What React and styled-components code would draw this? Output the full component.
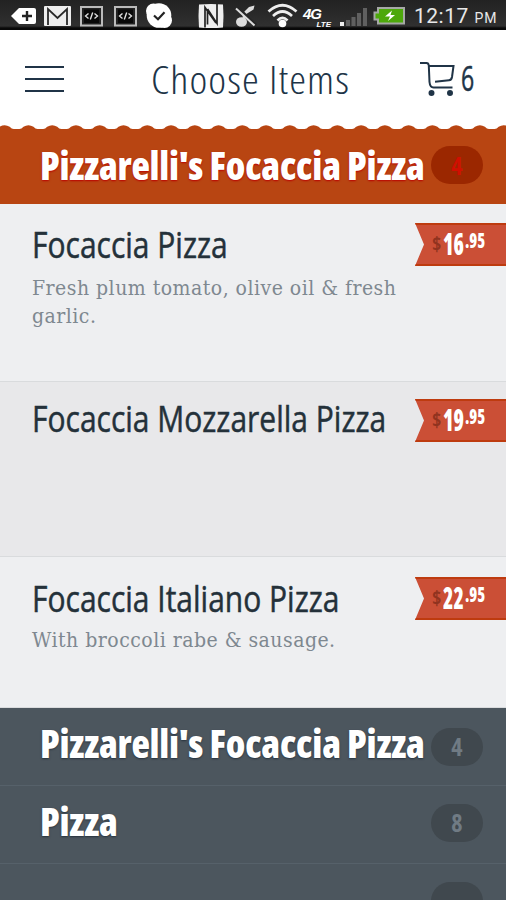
import React from "react";
import styled, { createGlobalStyle } from "styled-components";

const sections = [
  { name: "Pizzarelli's Focaccia Pizza", count: 4, padding: 20 },
  { name: "Pizza", count: 8, padding: 18 },
  { name: "", count: "", padding: 18 },
];

const items = [
  {
    name: "Focaccia Pizza",
    description: "Fresh plum tomato, olive oil & fresh garlic.",
    dollars: "16",
    cents: ".95",
    height: 178,
    padding: 19,
    lineHeight: 44,
  },
  {
    name: "Focaccia Mozzarella Pizza",
    description: "",
    dollars: "19",
    cents: ".95",
    height: 175,
    padding: 17,
    lineHeight: 40,
  },
  {
    name: "Focaccia Italiano Pizza",
    description: "With broccoli rabe & sausage.",
    dollars: "22",
    cents: ".95",
    height: 151,
    padding: 20,
    lineHeight: 43,
  },
];

const StatusIcons = () => (
  <>
    <Icon $left={10} $w={27}>
      <path d="M1 16 9 8h15q2 0 2 2v12q0 2-2 2H9z" fill="#fff" />
      <path d="M17 11v10M12 16h10" stroke="#222" strokeWidth="2.4" />
    </Icon>
    <Icon $left={7} $w={27}>
      <rect x="0" y="6" width="27" height="20" rx="1" fill="#eee" />
      <path d="M4 25V9l9.5 9L23 9v16" fill="none" stroke="#292929" strokeWidth="1.8" />
    </Icon>
    {[9, 11].map((left) => (
      <Icon key={left} $left={left} $w={23}>
        <rect x="1" y="7" width="21" height="18.5" fill="#222" stroke="#bbb" strokeWidth="2" />
        <rect x="4" y="9.5" width="15" height="13.5" fill="#080808" />
        <path d="m8.5 13.5-3 2.5 3 2.5m6-5 3 2.5-3 2.5M12.7 12.5l-2.4 7" fill="none" stroke="#ddd" strokeWidth="1.4" />
      </Icon>
    ))}
    <Icon $left={8} $w={28}>
      <circle cx="14" cy="15.5" r="12.3" fill="#fff" />
      <circle cx="8.5" cy="11" r="7.5" fill="#fff" />
      <circle cx="19.5" cy="20.5" r="7.5" fill="#fff" />
      <path d="m9 15.5 4 3.8 6.500-7" fill="none" stroke="#222" strokeWidth="2.2" />
    </Icon>
    <Icon $left={24} $w={28}>
      <path d="M2 4.500q12-1 24 0 1 11 0 23-12 1-24 0-1-12 0-23z" fill="#eee" />
      <path d="M8 27.500V7.500l11 15.500M10.500 11v13.500M20 4v19.500L10.500 9" fill="none" stroke="#222" strokeWidth="1.7" />
    </Icon>
    <Icon $left={9} $w={24}>
      <path d="M10 22V13" fill="none" stroke="#ddd" strokeWidth="2.6" />
      <path d="M9 13 15 7l5.500-1.500-1 4-8 5z" fill="#ddd" />
      <ellipse cx="7.5" cy="22" rx="5.5" ry="4.8" fill="#ddd" />
      <path d="m4 8 18 17.500" stroke="#262626" strokeWidth="3.4" />
      <path d="m2 8.500 18.500 17" stroke="#ddd" strokeWidth="2" />
    </Icon>
    <Icon $left={9} $w={31}>
      <path d="M1.5 11.5Q15.5-1 29.5 11.5M6 16q9.500-9 19 0M10.500 20.500q5-5 10 0" fill="none" stroke="#eee" strokeWidth="2.7" />
      <circle cx="15.5" cy="23.5" r="3.8" fill="#fff" />
    </Icon>
    <Network>
      <b>4G</b>
      <i>LTE</i>
    </Network>
    <Icon $left={9} $w={28}>
      <path d="M0 22h4v4H0z" fill="#eee" />
      <path d="M6 20h4v6H6zM11.500 17h4v9h-4zM17 13h4v13h-4zM23 8h4v18h-4z" fill="#606060" />
    </Icon>
    <Icon $left={5} $w={33}>
      <path d="M5 8h26v15.500H5v-4H1.500v-7H5z" fill="#4da80b" stroke="#a6a9a6" strokeWidth="2" />
      <path d="m19 10.500-7 6h5l-2 4.500 7-6h-4.500z" fill="#fff" />
    </Icon>
  </>
);

const Cart = () => (
  <svg width="36" height="36" viewBox="0 0 36 36" fill="none" stroke="#203447" strokeWidth="2">
    <path d="M0 2h6.500q2 0 2.300 2.500L9.500 21q.5 5.500 4 5.500h19M9 5h24.500l-1.500 11q-.5 3-3 3.300L15 20.800" />
    <circle cx="11.5" cy="32" r="2" fill="#203447" />
    <circle cx="30" cy="32" r="2" fill="#203447" />
  </svg>
);

const ScallopEdge = () => (
  <Edge viewBox="0 0 506 4">
    {Array.from({ length: 23 }, (_, i) => (
      <path
        key={i}
        d="M-9 4Q-7 4-5 1.800 0-1.500 5 1.800 7 4 9 4z"
        transform={`translate(${4.7 + i * 23.76} 0)`}
      />
    ))}
  </Edge>
);

const Price = ({ dollars, cents }) => (
  <Ribbon>
    <Currency>$</Currency>
    <Dollars>{dollars}</Dollars>
    <Cents>{cents}</Cents>
  </Ribbon>
);

const Item = ({ item, shaded }) => (
  <StyledItem
    $height={item.height}
    $padding={item.padding}
    $lineHeight={item.lineHeight}
    $shaded={shaded}
  >
    <div className="details">
      <h2>{item.name}</h2>
      {item.description && <p>{item.description}</p>}
    </div>
    <Price dollars={item.dollars} cents={item.cents} />
  </StyledItem>
);

const App = () => {
  return (
    <>
      <GlobalStyle />
      <Screen>
        <StatusBar>
          <StatusIcons />
          <Clock>
            12:17 <small>PM</small>
          </Clock>
        </StatusBar>
        <Header>
          <MenuButton aria-label="Menu">
            <span />
            <span />
            <span />
          </MenuButton>
          <Title>Choose Items</Title>
          <CartButton>
            <Cart />
            <span>6</span>
          </CartButton>
        </Header>
        <ScallopEdge />
        <Section $active $padding={17}>
          <h1>{sections[0].name}</h1>
          <Count $active>{sections[0].count}</Count>
        </Section>
        {items.map((item, index) => (
          <Item key={item.name} item={item} shaded={index === 1} />
        ))}
        {sections.map((section, index) => (
          <Section key={index} $padding={section.padding}>
            <h1>{section.name}</h1>
            <Count>{section.count}</Count>
          </Section>
        ))}
      </Screen>
    </>
  );
};

const GlobalStyle = createGlobalStyle`
  * {
    box-sizing: border-box;
  }
  body {
    margin: 0;
    overflow: hidden;
    font-family: "Open Sans", "Noto Sans", sans-serif;
    font-stretch: 75%;
  }
  h1, h2, p {
    margin: 0;
  }
  button {
    padding: 0;
    border: none;
    background: transparent;
    font: inherit;
  }
`;

const Screen = styled.div`
  display: flex;
  flex-direction: column;
  width: 506px;
  height: 900px;
  overflow: hidden;
  background: #4c565e;
`;

const StatusBar = styled.div`
  display: flex;
  flex: none;
  height: 30px;
  background: linear-gradient(#222, #303030 26px, #090909 28px);
`;

const Icon = styled.svg.attrs((props) => ({
  viewBox: `0 0 ${props.$w} 30`,
}))`
  flex: none;
  width: ${(props) => props.$w}px;
  height: 30px;
  margin-left: ${(props) => props.$left}px;
`;

const Network = styled.div`
  display: flex;
  flex-direction: column;
  flex: none;
  width: 28px;
  margin-left: 5px;
  padding-top: 8px;
  color: #fff;
  font-family: "Liberation Sans", sans-serif;
  font-style: italic;
  font-weight: 700;

  b {
    font-size: 15px;
    line-height: 12px;
    letter-spacing: -1px;
  }
  i {
    align-self: flex-end;
    font-size: 8px;
    line-height: 9px;
  }
`;

const Clock = styled.div`
  flex: none;
  margin-left: 8px;
  color: #e8e8e8;
  font-family: Roboto, sans-serif;
  font-size: 21px;
  font-stretch: 100%;
  letter-spacing: 0.5px;
  line-height: 33px;
  white-space: nowrap;

  small {
    font-size: 14px;
    letter-spacing: 0.8px;
  }
`;

const Header = styled.header`
  display: flex;
  align-items: center;
  flex: none;
  height: 95px;
  padding: 3px 32px 0 25px;
  background: #fff;
  color: #203447;
`;

const MenuButton = styled.button`
  display: flex;
  flex-direction: column;
  gap: 10px;
  width: 39px;

  span {
    height: 2px;
    background: #203447;
  }
`;

const Title = styled.div`
  width: 205px;
  margin-left: 87px;
  padding-bottom: 2px;
  font-size: 39px;
  font-weight: 300;
  letter-spacing: 1px;
  transform: scaleX(1.09);
  transform-origin: left;
  white-space: nowrap;
`;

const CartButton = styled.button`
  display: flex;
  align-items: center;
  margin-left: auto;
  color: #203447;
  font-size: 34px;
  font-stretch: 100%;
  line-height: 36px;

  span {
    width: 13px;
    margin-left: 5px;
    padding-bottom: 2px;
    transform: scaleX(0.68);
    transform-origin: left;
    -webkit-text-stroke: 0.5px #203447;
  }
`;

const Edge = styled.svg`
  flex: none;
  width: 506px;
  height: 4px;
  background: #fff;
  fill: #b84512;
`;

const Section = styled.section`
  display: flex;
  align-items: flex-start;
  flex: none;
  height: ${(props) => (props.$active ? "75px" : "78px")};
  padding: ${(props) => props.$padding}px 22px 0 40px;
  border-bottom: ${(props) => (props.$active ? "none" : "1px solid #56616a")};
  background: ${(props) => (props.$active ? "#b84512" : "#4c565e")};

  h1 {
    width: 383px;
    color: #fff;
    font-size: 38px;
    font-weight: 800;
    letter-spacing: -0.25px;
    line-height: ${(props) => (props.$active ? 38 : 70 - props.$padding * 2)}px;
    text-shadow: 0 1px 2px ${(props) => (props.$active ? "#b00" : "#26323d")};
    white-space: nowrap;
  }
`;

const Count = styled.div`
  display: flex;
  justify-content: center;
  align-items: center;
  flex: none;
  width: 52px;
  height: 38px;
  margin-left: 8px;
  padding-bottom: ${(props) => (props.$active ? 0 : 2)}px;
  border-radius: 19px;
  background: ${(props) => (props.$active ? "#9b2700" : "#40484e")};
  color: ${(props) => (props.$active ? "#d00f00" : "#707b84")};
  font-size: 24px;
  font-weight: 700;
`;

const StyledItem = styled.article`
  display: flex;
  justify-content: space-between;
  flex: none;
  height: ${(props) => props.$height}px;
  padding-top: ${(props) => props.$padding}px;
  border-bottom: 1px solid #d9dbdd;
  background: ${(props) => (props.$shaded ? "#e8e8ea" : "#eeeff1")};

  .details {
    width: 400px;
    padding-left: 32px;
  }

  h2 {
    color: #24313a;
    font-size: 36px;
    font-stretch: 100%;
    font-weight: 400;
    line-height: ${(props) => props.$lineHeight}px;
    transform: scaleX(0.833);
    transform-origin: left;
    white-space: nowrap;
    -webkit-text-stroke: 0.5px #24313a;
  }

  p {
    width: 368px;
    margin-top: ${(props) => (props.$lineHeight === 43 ? 6 : 7)}px;
    color: #7e8890;
    font-family: "DejaVu Serif Condensed", "DejaVu Serif", serif;
    font-size: 21px;
    letter-spacing: 0.48px;
    line-height: 28px;
  }
`;

const Ribbon = styled.div`
  display: flex;
  flex: none;
  width: 91px;
  height: 43px;
  padding-left: 17px;
  border: solid #be3b0f;
  border-width: 2px 0;
  background: #cb4f36;
  clip-path: polygon(0 0, 100% 0, 100% 100%, 0 100%, 9px 50%);
  color: #fff;
  font-weight: 800;
  line-height: 38px;

  span {
    transform-origin: left;
  }
`;

const Currency = styled.span`
  width: 11px;
  color: #90331f;
  font-size: 20px;
  font-weight: 700;
`;

const Dollars = styled.span`
  width: 22px;
  font-size: 30px;
  transform: scaleX(0.7);
`;

const Cents = styled.span`
  width: 20px;
  font-size: 21px;
  line-height: 30px;
  transform: scaleX(0.76);
`;

export default App;
